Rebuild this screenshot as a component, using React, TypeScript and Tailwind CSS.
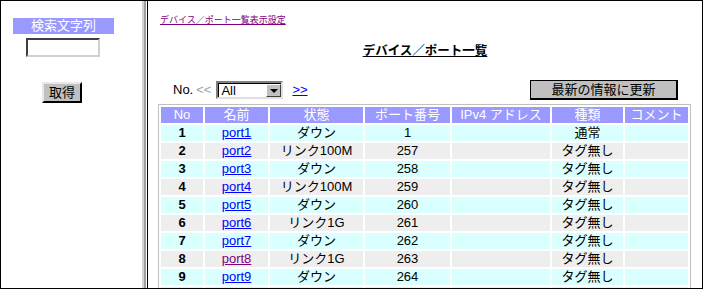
import React from 'react';

const font = "font-[family-name:'Liberation_Sans','Noto_Sans_CJK_JP',sans-serif]";

type PortRow = {
  no: number;
  name: string;
  state: string;
  port: string;
  kind: string;
  visited?: boolean;
};

const rows: PortRow[] = [
  { no: 1, name: 'port1', state: 'ダウン', port: '1', kind: '通常' },
  { no: 2, name: 'port2', state: 'リンク100M', port: '257', kind: 'タグ無し' },
  { no: 3, name: 'port3', state: 'ダウン', port: '258', kind: 'タグ無し' },
  { no: 4, name: 'port4', state: 'リンク100M', port: '259', kind: 'タグ無し' },
  { no: 5, name: 'port5', state: 'ダウン', port: '260', kind: 'タグ無し' },
  { no: 6, name: 'port6', state: 'リンク1G', port: '261', kind: 'タグ無し' },
  { no: 7, name: 'port7', state: 'ダウン', port: '262', kind: 'タグ無し' },
  { no: 8, name: 'port8', state: 'リンク1G', port: '263', kind: 'タグ無し', visited: true },
  { no: 9, name: 'port9', state: 'ダウン', port: '264', kind: 'タグ無し' },
];

const headers = ['No', '名前', '状態', 'ポート番号', 'IPv4 アドレス', '種類', 'コメント'];

const cell = 'h-[16px] p-0 leading-[16px] text-center';

export default function App() {
  return (
    <div className={`w-[703px] h-[290px] bg-white text-[13px] text-black ${font}`}>
      <div className="w-[703px] h-[289px] border border-black flex overflow-hidden">
        {/* Left search frame */}
        <div className="w-[141px] shrink-0 flex flex-col">
          <div className="mt-[17px] ml-[12px] w-[101px] h-[16px] bg-[#9999ff] text-white text-center leading-[16px]">
            検索文字列
          </div>
          <div className="mt-[4px] ml-[25px] w-[74px] h-[19px] bg-white border-2 border-t-[#404040] border-l-[#404040] border-b-[#d4d0c8] border-r-[#d4d0c8]" />
          <button className="mt-[25px] ml-[41px] w-[40px] h-[21px] bg-[#c0c0c0] border-2 border-t-[#e8e8e8] border-l-[#e8e8e8] border-b-black border-r-black leading-[15px] text-[13px]">
            取得
          </button>
        </div>

        {/* Frame splitter */}
        <div className="w-[5px] shrink-0 flex">
          <div className="w-[2px] bg-[#d4d4d4]" />
          <div className="w-[2px] bg-[#a0a0a0]" />
          <div className="w-[1px] bg-white" />
        </div>

        {/* Right content frame */}
        <div className="flex-1 border-l border-black flex flex-col overflow-hidden">
          <a className="mt-[14px] ml-[12px] text-[9px] leading-[11px] text-[#800080] underline self-start">
            デバイス／ポート一覧表示設定
          </a>
          <h1 className="mt-[17px] text-center font-bold text-[12.5px] leading-[16px] underline">デバイス／ポート一覧</h1>

          <div className="mt-[21px] h-[20px] flex items-center">
            <span className="ml-[25px]">No.</span>
            <span className="ml-[3px] text-[#a0a0a0]">&lt;&lt;</span>
            <div className="ml-[5px] w-[67px] h-[18px] flex border-2 border-t-[#808080] border-l-[#808080] border-b-[#e0e0e0] border-r-[#e0e0e0] bg-white">
              <div className="flex-1 border-t border-l border-black pl-[2px] leading-[14px]">All</div>
              <div className="w-[15px] border-t border-black flex">
                <div className="flex-1 bg-[#c0c0c0] border border-t-white border-l-white border-b-[#404040] border-r-[#404040] flex items-center justify-center">
                  <div className="w-0 h-0 border-l-[4px] border-r-[4px] border-t-[4px] border-l-transparent border-r-transparent border-t-black" />
                </div>
              </div>
            </div>
            <a className="ml-[9px] text-[#0000ff] underline">&gt;&gt;</a>
            <button className="ml-auto mr-[24px] w-[148px] h-[20px] bg-[#c0c0c0] border border-black border-r-2 border-b-2 leading-[16px] text-[13px]">
              最新の情報に更新
            </button>
          </div>

          <table className="mt-[4px] ml-[10px] w-[533px] table-fixed border-separate border-spacing-[2px] border border-[#c0c0c0]">
            <colgroup>
              <col className="w-[42px]" />
              <col className="w-[63px]" />
              <col className="w-[93px]" />
              <col className="w-[85px]" />
              <col className="w-[98px]" />
              <col className="w-[71px]" />
              <col className="w-[63px]" />
            </colgroup>
            <thead>
              <tr>
                {headers.map((h) => (
                  <th key={h} className={`${cell} bg-[#9999ff] text-white font-normal whitespace-nowrap`}>
                    {h}
                  </th>
                ))}
              </tr>
            </thead>
            <tbody>
              {rows.map((r) => {
                const bg = r.no % 2 === 1 ? 'bg-[#d9ffff]' : 'bg-[#eeeeee]';
                return (
                  <tr key={r.no}>
                    <td className={`${cell} font-bold ${bg}`}>{r.no}</td>
                    <td className={`${cell} ${bg}`}>
                      <a className={`underline ${r.visited ? 'text-[#800080]' : 'text-[#0000ff]'}`}>{r.name}</a>
                    </td>
                    <td className={`${cell} ${bg}`}>{r.state}</td>
                    <td className={`${cell} ${bg}`}>{r.port}</td>
                    <td className={`${cell} ${bg}`}></td>
                    <td className={`${cell} ${bg}`}>{r.kind}</td>
                    <td className={`${cell} ${bg}`}></td>
                  </tr>
                );
              })}
              {/* next row, cut off by the frame edge */}
              <tr>
                {headers.map((h) => (
                  <td key={h} className={`${cell} bg-[#eeeeee]`}></td>
                ))}
              </tr>
            </tbody>
          </table>
        </div>
      </div>
    </div>
  );
}
